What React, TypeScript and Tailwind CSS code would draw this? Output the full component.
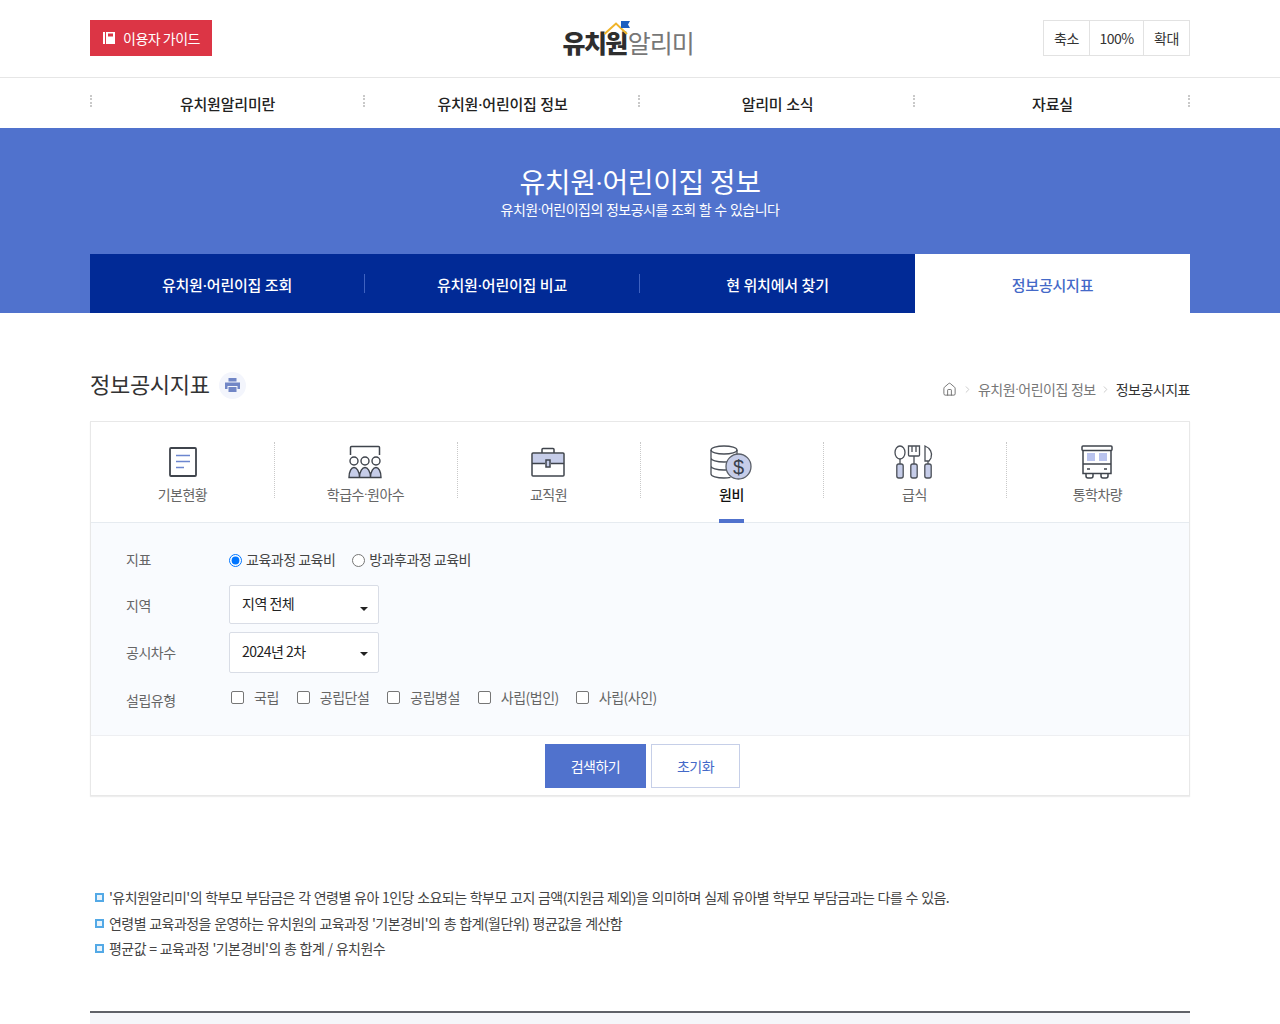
import { Home, ChevronRight } from "lucide-react";

const font = { fontFamily: '"Noto Sans CJK KR", "Noto Sans", sans-serif' };

const navItems = ["유치원알리미란", "유치원·어린이집 정보", "알리미 소식", "자료실"];
const notes = [
  "'유치원알리미'의 학부모 부담금은 각 연령별 유아 1인당 소요되는 학부모 고지 금액(지원금 제외)을 의미하며 실제 유아별 학부모 부담금과는 다를 수 있음.",
  "연령별 교육과정을 운영하는 유치원의 교육과정 '기본경비'의 총 합계(월단위) 평균값을 계산함",
  "평균값 = 교육과정 '기본경비'의 총 합계 / 유치원수",
];
const foundTypes = [
  { name: "국립", cls: "mr-[18px]" },
  { name: "공립단설", cls: "mr-[18px]" },
  { name: "공립병설", cls: "mr-[18px]" },
  { name: "사립(법인)", cls: "mr-[17px]" },
  { name: "사립(사인)", cls: "" },
];

// the CJK font has a full width middle dot, the reference has a narrow one
const Txt = ({ children }: { children: string }) => {
  const parts = children.split("·");
  return (
    <>
      {parts.map((p, i) => (
        <span key={i}>
          {i > 0 && <span className="font-['Roboto'] leading-none">·</span>}
          {p}
        </span>
      ))}
    </>
  );
};

const Dots = ({ first }: { first?: boolean }) => (
  <span className={`h-[12px] shrink-0 border-l-2 border-dotted border-[#c9c9c9] mt-[-4px] ${first ? "mr-[-2px]" : ""}`} />
);

const DocIcon = () => (
  <svg width="32" height="32" viewBox="0 0 32 32" fill="none">
    <rect x="3" y="2" width="26" height="28" rx="1" stroke="#3f444c" strokeWidth="1.8" />
    <path d="M9 9.500h14M9 15.500h14M9 21.500h8" stroke="#6c86cf" strokeWidth="1.6" />
  </svg>
);
const ClassIcon = () => (
  <svg width="34" height="34" viewBox="0 0 34 34" fill="none">
    <path d="M2.500 10V2.500a1 1 0 0 1 1-1h27a1 1 0 0 1 1 1V10" stroke="#3f444c" strokeWidth="1.500" />
    <circle cx="6" cy="16" r="4" stroke="#3f444c" strokeWidth="1.400" />
    <circle cx="17" cy="16" r="4" stroke="#3f444c" strokeWidth="1.400" />
    <circle cx="28" cy="16" r="4" stroke="#3f444c" strokeWidth="1.400" />
    <path d="M1 32.500C1 26 3.500 22.500 6 22.500S11.500 26 11.500 32.500C11.500 26 14.500 22.500 17 22.500S22.500 26 22.500 32.500C22.500 26 25.500 22.500 28 22.500S33 26 33 32.500z" fill="#c6cde9" stroke="#3f444c" strokeWidth="1.400" />
  </svg>
);
const CaseIcon = () => (
  <svg width="34" height="30" viewBox="0 0 34 30" fill="none">
    <path d="M1.500 6.500h31v10h-31z" fill="#c6cde9" />
    <rect x="1" y="6" width="32" height="23" rx="1" stroke="#3f444c" strokeWidth="1.500" />
    <path d="M11 6V2.500a1 1 0 0 1 1-1h10a1 1 0 0 1 1 1V6M1 16.500h13M20 16.500h13" stroke="#3f444c" strokeWidth="1.500" />
    <rect x="15" y="13" width="4" height="7" fill="#c6cde9" stroke="#3f444c" strokeWidth="1.500" />
  </svg>
);
const MoneyIcon = () => (
  <svg width="42" height="35" viewBox="0 0 42 35" fill="none">
    <ellipse cx="14" cy="5" rx="13" ry="4" stroke="#4a4f57" strokeWidth="1.300" />
    <path d="M1 5v24c0 2.200 5.800 4 13 4 2.500 0 4.600-.2 6.500-.6M1 13c0 2.200 5.800 4 13 4 2.500 0 4.500-.2 6-.6M1 21c0 2.200 5.800 4 13 4h2.500M27 5v5" stroke="#4a4f57" strokeWidth="1.300" />
    <circle cx="28.500" cy="21.500" r="12.500" fill="#c6cde9" stroke="#5a5f68" strokeWidth="1.300" />
    <text x="28.500" y="28.500" textAnchor="middle" fontSize="20" fill="#39404c" fontFamily="Liberation Sans, sans-serif">$</text>
  </svg>
);
const FoodIcon = () => (
  <svg width="40" height="34" viewBox="0 0 40 34" fill="none">
    <ellipse cx="6" cy="7.500" rx="5" ry="6.500" stroke="#4a4f57" strokeWidth="1.300" />
    <path d="M6 14v5" stroke="#4a4f57" strokeWidth="1.300" />
    <rect x="2.800" y="19" width="6.400" height="14" rx="2" fill="#c6cde9" stroke="#4a4f57" strokeWidth="1.300" />
    <path d="M14.500 1v9a1 1 0 0 0 1 1h9a1 1 0 0 0 1-1V1zM18 1v6M22 1v6M20 11v8" stroke="#4a4f57" strokeWidth="1.300" />
    <rect x="16.800" y="19" width="6.400" height="14" rx="2" fill="#c6cde9" stroke="#4a4f57" strokeWidth="1.300" />
    <path d="M31 1c5 2 8 7 6 12l-2 3h-4zM34 16v3" stroke="#4a4f57" strokeWidth="1.300" />
    <rect x="30.800" y="19" width="6.400" height="14" rx="2" fill="#c6cde9" stroke="#4a4f57" strokeWidth="1.300" />
  </svg>
);
const BusIcon = () => (
  <svg width="32" height="34" viewBox="0 0 32 34" fill="none">
    <rect x="1" y="1" width="30" height="4.500" rx="1" stroke="#3f444c" strokeWidth="1.500" />
    <path d="M2 5.500v23h28v-23M2 19h28" stroke="#3f444c" strokeWidth="1.500" />
    <rect x="6" y="8" width="8" height="8" fill="#b9c3ee" />
    <rect x="18" y="8" width="8" height="8" fill="#b9c3ee" />
    <path d="M6 24h3M23 24h3" stroke="#3f444c" strokeWidth="1.500" />
    <path d="M5 28.500v2.500a2 2 0 0 0 2 2h3a2 2 0 0 0 2-2v-2.500M20 28.500v2.500a2 2 0 0 0 2 2h3a2 2 0 0 0 2-2v-2.500" stroke="#3f444c" strokeWidth="1.500" />
  </svg>
);

const categories = [
  { name: "기본현황", icon: <DocIcon /> },
  { name: "학급수·원아수", icon: <ClassIcon /> },
  { name: "교직원", icon: <CaseIcon /> },
  { name: "원비", icon: <MoneyIcon />, active: true },
  { name: "급식", icon: <FoodIcon /> },
  { name: "통학차량", icon: <BusIcon /> },
];

const Caret = ({ top }: { top: string }) => (
  <span className={`absolute right-[10px] ${top} border-x-[4px] border-t-[4px] border-x-transparent border-t-[#222]`} />
);

const App = () => {
  return (
    <div className="w-full bg-white text-[#333] overflow-hidden h-[1024px]" style={font}>
      {/* Header */}
      <header className="h-[78px] border-b border-[#e6e6e6]">
        <div className="w-[1100px] mx-auto h-full flex items-start justify-between relative">
          <a className="mt-[20px] w-[122px] h-[36px] bg-[#dc3545] text-white text-[14px] tracking-[-0.5px] flex items-center pl-[13px] gap-[8px]">
            <svg width="12" height="12" viewBox="0 0 12 12"><path d="M0 0h2v12H0zM3 0h9v12H3z" fill="#fff" /><path d="M5 1.500h5v3H5z" fill="#dc3545" /></svg>
            이용자 가이드
          </a>
          <div className="mt-[20px] relative w-[130px] h-[36px] flex items-end leading-none text-[25px] whitespace-nowrap">
            <span className="font-black text-[#2e2e2e] pb-[1px] tracking-[-1.600px]">유치원</span>
            <span className="font-normal text-[#777] pb-[1px] tracking-[-1px] ml-[1px]">알리미</span>
            <svg className="absolute left-[41px] top-[1px]" width="26" height="15" viewBox="0 0 26 15" fill="none">
              <path d="M0.500 13 L12 2.500 L23 13" stroke="#f0b429" strokeWidth="2" />
              <path d="M17 0h9l-2 3.500 2 3.500h-9z" fill="#1d5fc0" />
            </svg>
          </div>
          <div className="mt-[20px] h-[36px] flex border border-[#e2e2e2] text-[14px] tracking-[-0.5px] text-[#333]">
            <span className="w-[45px] flex items-center justify-center">축소</span>
            <span className="w-[55px] flex items-center justify-center border-x border-[#e2e2e2]">100%</span>
            <span className="w-[45px] flex items-center justify-center">확대</span>
          </div>
        </div>
      </header>

      {/* Main nav */}
      <nav className="h-[50px]">
        <div className="w-[1100px] mx-auto h-full flex items-center relative">
          <Dots first />
          {navItems.map((item) => (
            <div key={item} className="flex items-center w-[275px] h-full">
              <a className="flex-1 text-center text-[15px] font-medium text-[#222] tracking-[-0.2px] [word-spacing:0.5px] pt-[2px] pl-[2px]"><Txt>{item}</Txt></a>
              <Dots />
            </div>
          ))}
        </div>
      </nav>

      {/* Hero */}
      <section className="h-[185px] bg-[#5072cd] flex flex-col">
        <div className="flex-1 text-center text-white">
          <h2 className="text-[28px] leading-[36px] mt-[35px] font-normal tracking-[-0.4px]"><Txt>유치원·어린이집 정보</Txt></h2>
          <p className="text-[14px] leading-[18px] mt-[1px] tracking-[-0.5px] [word-spacing:0.5px]"><Txt>유치원·어린이집의 정보공시를 조회 할 수 있습니다</Txt></p>
        </div>
        <div className="w-[1100px] mx-auto h-[59px] flex bg-[#012a96] text-white text-[15px] font-medium tracking-[-0.2px] [word-spacing:0.5px]">
          {["유치원·어린이집 조회", "유치원·어린이집 비교", "현 위치에서 찾기"].map((tab, i) => (
            <div key={tab} className="w-[275px] flex items-center relative">
              <a className="flex-1 text-center pt-[3px]"><Txt>{tab}</Txt></a>
              {i < 2 && <span className="h-[19px] w-px bg-[#3f62c0]" />}
            </div>
          ))}
          <div className="w-[275px] bg-white text-[#4469c8] flex items-center justify-center pt-[3px]">정보공시지표</div>
        </div>
      </section>

      {/* Title row */}
      <div className="w-[1100px] mx-auto mt-[54px] h-[54px] flex items-start justify-between">
        <div className="flex items-center gap-[9px]">
          <h3 className="text-[22px] leading-[32px] pb-[4px] font-normal text-[#333] tracking-[-0.3px]">정보공시지표</h3>
          <span className="w-[27px] h-[27px] rounded-full bg-[#f3f5fc] flex items-center justify-center">
            <svg width="15" height="14" viewBox="0 0 15 14" fill="#7186c6">
              <path d="M3.500 0h8v3.500h-8zM0 4.500h15V11h-2.500V8h-10v3H0zM3.500 9h8v5h-8z" />
            </svg>
          </span>
        </div>
        <div className="flex items-center text-[14px] tracking-[-0.5px] [word-spacing:0.5px] text-[#777] mt-[12px] leading-[20px]">
          <Home size={15} strokeWidth={1.400} className="text-[#666] mr-[5px]" />
          <ChevronRight size={11} className="text-[#c8c8c8] mr-[5px]" />
          <span><Txt>유치원·어린이집 정보</Txt></span>
          <ChevronRight size={11} className="text-[#c8c8c8] mx-[4.500px]" />
          <span className="text-[#333]">정보공시지표</span>
        </div>
      </div>

      {/* Search box */}
      <div className="w-[1100px] mx-auto border border-[#e8e8e8] shadow-[0_1px_1px_#eee]">
        <ul className="h-[101px] flex border-b border-[#e6ebf0]">
          {categories.map((c, i) => (
            <li key={c.name} className="w-[183px] relative flex flex-col items-center">
              <div className={`h-[36px] mt-[22px] flex items-center justify-center ${i > 0 ? "pr-[2px]" : ""}`}>{c.icon}</div>
              <span className={`mt-[4px] text-[14px] leading-[20px] tracking-[-0.5px] ${c.active ? "font-medium text-[#111]" : "text-[#666]"}`}><Txt>{c.name}</Txt></span>
              {c.active && <span className="absolute bottom-[-1px] h-[4px] w-[25px] bg-[#5072cd]" />}
              {i < 5 && <span className="absolute right-[-1px] top-[20px] h-[56px] border-r border-dotted border-[#c9c9c9]" />}
            </li>
          ))}
        </ul>
        <div className="bg-[#f9fbfe] h-[213px] pt-[19px] pl-[35px] border-b border-[#eeeff2] text-[14px] tracking-[-0.5px]">
          <div className="flex h-[35px] items-center">
            <span className="w-[103px] text-[#666]">지표</span>
            <label className="flex items-center">
              <input type="radio" name="idx" defaultChecked className="w-[13px] h-[13px] mr-[4px] mt-[2px]" />
              <span className="text-[#444]">교육과정 교육비</span>
            </label>
            <label className="flex items-center ml-[17px]">
              <input type="radio" name="idx" className="w-[13px] h-[13px] mr-[4px] mt-[2px]" />
              <span className="text-[#444]">방과후과정 교육비</span>
            </label>
          </div>
          <div className="flex items-center mt-[8px] h-[39px]">
            <span className="w-[103px] text-[#666] pt-[2px]">지역</span>
            <div className="relative w-[150px] h-[39px] bg-white border border-[#d9dde6] rounded-[2px] pl-[12px] leading-[35px] text-[#222]">
              지역 전체<Caret top="top-[21px]" />
            </div>
          </div>
          <div className="flex items-center mt-[8px] h-[41px]">
            <span className="w-[103px] text-[#666]">공시차수</span>
            <div className="relative w-[150px] h-[41px] bg-white border border-[#d9dde6] rounded-[2px] pl-[12px] leading-[37px] text-[#222]">
              2024년 2차<Caret top="top-[19px]" />
            </div>
          </div>
          <div className="flex items-start mt-[17px] h-[20px]">
            <span className="w-[103px] text-[#666] leading-[20px]">설립유형</span>
            <div className="flex items-center pl-[2px] mt-[-3px] leading-[20px]">
              {foundTypes.map((t) => (
                <label key={t.name} className={`flex items-center text-[#666] ${t.cls}`}>
                  <span className="w-[13px] h-[13px] border border-[#767676] rounded-[2px] bg-white mr-[10px]" />
                  {t.name}
                </label>
              ))}
            </div>
          </div>
        </div>
        <div className="h-[59px] flex justify-center items-start pt-[8px] pl-[5px] gap-[5px] text-[14px] tracking-[-0.5px]">
          <button className="w-[101px] h-[44px] bg-[#5072cd] text-white">검색하기</button>
          <button className="w-[89px] h-[44px] bg-white border border-[#c6cfe8] text-[#4469c8]">초기화</button>
        </div>
      </div>

      {/* Notes */}
      <ul className="w-[1100px] mx-auto mt-[89px] text-[14px] leading-[25.500px] tracking-[-0.55px] [word-spacing:0.7px] text-[#444]">
        {notes.map((note) => (
          <li key={note} className="flex items-center">
            <span className="w-[9px] h-[9px] border-2 border-[#53a9e6] bg-[#e8f3fb] ml-[5px] mr-[5px]" />
            <span>{note}</span>
          </li>
        ))}
      </ul>

      {/* Table top */}
      <div className="w-[1100px] mx-auto mt-[49px] border-t-2 border-[#5f6168] h-[20px] bg-[#f5f6fa]" />
    </div>
  );
};

export default App;
